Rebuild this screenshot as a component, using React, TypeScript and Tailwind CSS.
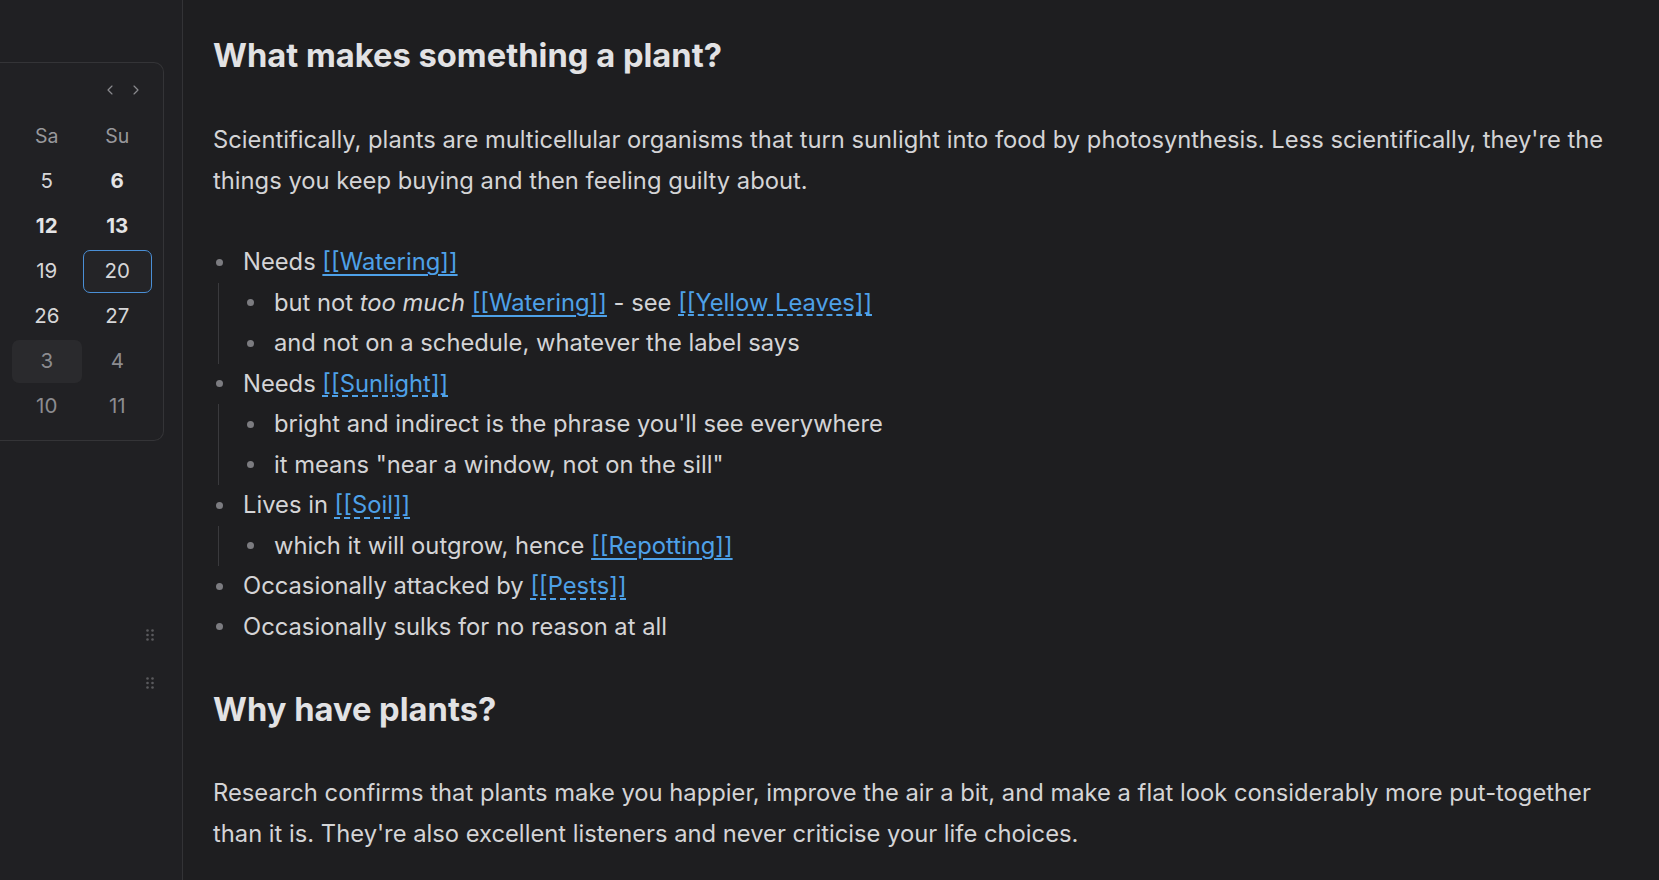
import React from 'react';
import { ChevronLeft, ChevronRight } from 'lucide-react';

type Day = { n: number; tone: 'bold' | 'normal' | 'muted'; today?: boolean; hover?: boolean };

const weeks: Day[][] = [
  [{ n: 5, tone: 'normal' }, { n: 6, tone: 'bold' }],
  [{ n: 12, tone: 'bold' }, { n: 13, tone: 'bold' }],
  [{ n: 19, tone: 'normal' }, { n: 20, tone: 'normal', today: true }],
  [{ n: 26, tone: 'normal' }, { n: 27, tone: 'normal' }],
  [{ n: 3, tone: 'muted', hover: true }, { n: 4, tone: 'muted' }],
  [{ n: 10, tone: 'muted' }, { n: 11, tone: 'muted' }],
];

const toneClass = {
  bold: 'font-bold text-[#e4e4e6]',
  normal: 'text-[#d6d6d8]',
  muted: 'text-[#8c8c90]',
};

const DayCell = ({ day }: { day: Day }) => {
  let box = 'border border-transparent';
  if (day.today) box = 'border-[1.5px] border-[#4a8fd6] bg-[#242427]';
  if (day.hover) box = 'border border-transparent bg-[#2a2a2d]';
  return (
    <div className={`h-[43px] w-[70px] flex items-center justify-center rounded-[7px] text-[20.5px] ${box} ${toneClass[day.tone]}`}>
      {day.n}
    </div>
  );
};

const Grip = () => (
  <svg width="8" height="12" viewBox="0 0 8 12" className="text-[#5a5a5e]">
    {[1.5, 6.5].map((x) =>
      [1.5, 6, 10.5].map((y) => <circle key={`${x}-${y}`} cx={x} cy={y} r="1.3" fill="currentColor" />)
    )}
  </svg>
);

const Link = ({ children, dashed }: { children: React.ReactNode; dashed?: boolean }) => (
  <span
    className={`text-[#4ea1e8] underline underline-offset-[4px] decoration-[1.5px] decoration-[#4ea1e8] ${dashed ? 'decoration-dashed' : ''}`}
  >
    {children}
  </span>
);

const Bullet = () => (
  <div className="w-[12px] h-[40.5px] shrink-0 flex items-center justify-center">
    <div className="w-[7px] h-[7px] rounded-full bg-[#7c7c80]" />
  </div>
);

const Item = ({ children, sub }: { children: React.ReactNode; sub?: React.ReactNode[] }) => (
  <li>
    <div className="flex gap-[18px]">
      <Bullet />
      <div>{children}</div>
    </div>
    {sub && (
      <ul className="ml-[5px] border-l border-[#3a3a3d] pl-[25px]">
        {sub.map((s, i) => (
          <li key={i} className="flex gap-[18px]">
            <Bullet />
            <div>{s}</div>
          </li>
        ))}
      </ul>
    )}
  </li>
);

export default function App() {
  return (
    <div
      className="flex h-[880px] w-full overflow-hidden bg-[#1e1e20] text-[#d4d4d6]"
      style={{ fontFamily: 'Inter, "Noto Sans", sans-serif' }}
    >
      <aside className="w-[183px] shrink-0 border-r border-[#333336] bg-[#202023] pt-[62px] flex flex-col">
        <div className="w-[164px] h-[379px] rounded-r-[10px] border border-l-0 border-[#343437] bg-[#212124] pt-[14px] pl-[12px] pr-[11px]">
          <div className="h-[26px] flex items-center justify-end gap-[10px] pr-[8px] text-[#8a8a8e]">
            <ChevronLeft size={16} strokeWidth={1.75} />
            <ChevronRight size={16} strokeWidth={1.75} />
          </div>
          <div className="mt-[12px] flex flex-col gap-[2px]">
            <div className="flex gap-[1px] text-[19.5px] text-[#98989c]">
              <div className="h-[43px] w-[70px] flex items-center justify-center">Sa</div>
              <div className="h-[43px] w-[70px] flex items-center justify-center">Su</div>
            </div>
            {weeks.map((w, i) => (
              <div key={i} className="flex gap-[1px]">
                {w.map((d) => (
                  <DayCell key={d.n} day={d} />
                ))}
              </div>
            ))}
          </div>
        </div>
        <div className="mt-[188px] flex flex-col items-end gap-[36px] pr-[28px]">
          <Grip />
          <Grip />
        </div>
      </aside>

      <main className="flex-1 pl-[30px] pr-[36px] pt-[36px] text-[23.75px] leading-[40.5px]">
        <h2 className="text-[32.7px] leading-[38px] font-bold text-[#e2e2e4]">
          What makes something a plant?
        </h2>
        <p className="mt-[46px]">
          Scientifically, plants are multicellular organisms that turn sunlight into food by photosynthesis. Less
          scientifically, they're the things you keep buying and then feeling guilty about.
        </p>
        <ul className="mt-[41px]">
          <Item
            sub={[
              <>
                but not <em>too much</em> <Link>[[Watering]]</Link> - see <Link dashed>[[Yellow Leaves]]</Link>
              </>,
              <>and not on a schedule, whatever the label says</>,
            ]}
          >
            Needs <Link>[[Watering]]</Link>
          </Item>
          <Item
            sub={[
              <>bright and indirect is the phrase you'll see everywhere</>,
              <>it means "near a window, not on the sill"</>,
            ]}
          >
            Needs <Link dashed>[[Sunlight]]</Link>
          </Item>
          <Item sub={[<>which it will outgrow, hence <Link>[[Repotting]]</Link></>]}>
            Lives in <Link dashed>[[Soil]]</Link>
          </Item>
          <Item>
            Occasionally attacked by <Link dashed>[[Pests]]</Link>
          </Item>
          <Item>Occasionally sulks for no reason at all</Item>
        </ul>
        <h2 className="mt-[43px] text-[32.7px] leading-[38px] font-bold text-[#e2e2e4]">
          Why have plants?
        </h2>
        <p className="mt-[45px]">
          Research confirms that plants make you happier, improve the air a bit, and make a flat look considerably more
          put-together than it is. They're also excellent listeners and never criticise your life choices.
        </p>
      </main>
    </div>
  );
}
